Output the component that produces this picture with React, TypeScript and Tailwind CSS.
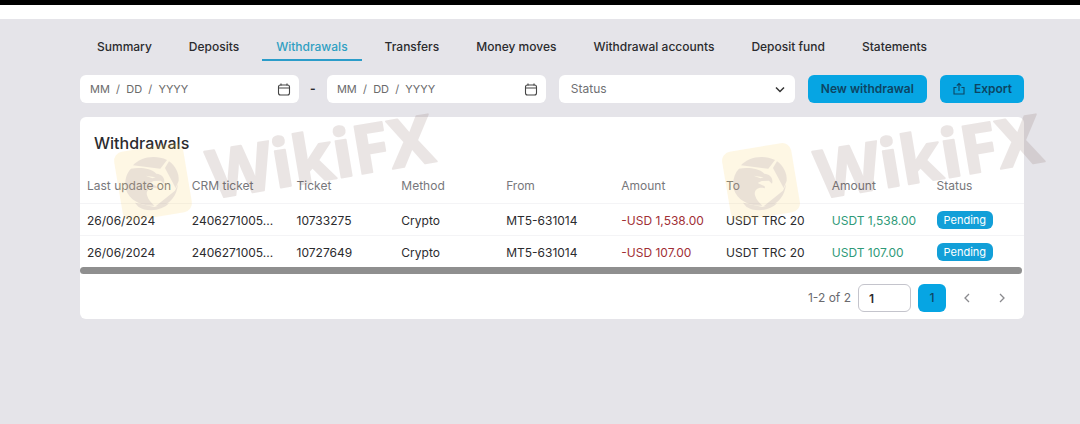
import { useState } from 'react';

const tabs = ['Summary', 'Deposits', 'Withdrawals', 'Transfers', 'Money moves', 'Withdrawal accounts', 'Deposit fund', 'Statements'];

const columns = [
    { label: 'Last update on', width: 'w-[11.1%]' },
    { label: 'CRM ticket', width: 'w-[11.1%]' },
    { label: 'Ticket', width: 'w-[11.1%]' },
    { label: 'Method', width: 'w-[11.1%]' },
    { label: 'From', width: 'w-[12.2%]' },
    { label: 'Amount', width: 'w-[11.1%]' },
    { label: 'To', width: 'w-[11.2%]' },
    { label: 'Amount', width: 'w-[11.1%]' },
    { label: 'Status', width: 'w-[10%]' },
];

type Withdrawal = {
    date: string;
    crmTicket: string;
    ticket: string;
    method: string;
    from: string;
    debit: string;
    to: string;
    credit: string;
    status: string;
};

const withdrawals: Withdrawal[] = [
    {
        date: '26/06/2024',
        crmTicket: '2406271005...',
        ticket: '10733275',
        method: 'Crypto',
        from: 'MT5-631014',
        debit: '-USD 1,538.00',
        to: 'USDT TRC 20',
        credit: 'USDT 1,538.00',
        status: 'Pending',
    },
    {
        date: '26/06/2024',
        crmTicket: '2406271005...',
        ticket: '10727649',
        method: 'Crypto',
        from: 'MT5-631014',
        debit: '-USD 107.00',
        to: 'USDT TRC 20',
        credit: 'USDT 107.00',
        status: 'Pending',
    },
];

function CalendarIcon() {
    return (
        <svg viewBox="0 0 14 14" className="size-3.5" fill="none" stroke="#444" strokeWidth="1.1">
            <rect x="1.5" y="3" width="11" height="10" rx="2" />
            <path d="M1.5 6h11M4 1.5v2M10 1.5v2" />
        </svg>
    );
}

function DateField({ label }: { label: string }) {
    return (
        <div className="flex h-7 min-w-0 flex-1 items-center rounded-md bg-white pr-2 pl-2.5">
            <input
                type="text"
                aria-label={label}
                placeholder="MM  /  DD  /  YYYY"
                className="min-w-0 flex-1 text-[11px] outline-none placeholder:text-[#6b6b6b]"
            />
            <button type="button" aria-label={`Open ${label} calendar`}>
                <CalendarIcon />
            </button>
        </div>
    );
}

function Watermark() {
    return (
        <svg viewBox="0 0 340 120" className="h-[120px] w-[340px] overflow-visible">
            <rect x="13" y="42" width="70" height="70" rx="9" fill="#f9cf60" opacity="0.17" transform="rotate(-9.5 48 77)" />
            {/* eagle inside a camera shutter */}
            <g transform="translate(2 33) scale(0.3333)" fill="#8a7898" opacity="0.17">
                <path d="M78 82C98 60 140 48 180 66L160 92Z" />
                <path d="M186 70C206 84 216 106 215 128L206 150L174 90Z" />
                <path d="M213 138C210 172 190 198 160 205L146 205L204 158Z" />
                <path d="M142 207L186 196C166 218 120 224 94 206L84 194Z" />
                <path d="M72 92C98 88 132 90 148 107C164 108 176 120 171 137L162 128L140 129L128 135L149 145L150 151C128 144 116 158 120 172C124 186 132 194 142 203C104 204 66 188 56 152C52 128 58 106 72 92ZM116 113L136 121L146 118Z" fillRule="evenodd" />
            </g>
            <text
                x="107"
                y="94"
                transform="rotate(-9.5 107 94)"
                fill="#5a3028"
                stroke="#5a3028"
                strokeWidth="2"
                strokeLinejoin="round"
                opacity="0.12"
                className="font-['Noto_Sans',sans-serif] text-[67px] font-bold"
            >
                WikiFX
            </text>
        </svg>
    );
}

export default function App() {
    const [activeTab, setActiveTab] = useState('Withdrawals');
    const [page, setPage] = useState('1');

    return (
        <div className="relative min-h-screen overflow-hidden bg-[#e5e4e9] font-[Inter,sans-serif] text-xs text-[#2b2b2e]">
            <div className="h-[5px] bg-black" />
            <div className="h-3.5 bg-white" />

            <main className="pt-3.5 pr-14 pl-20">
                <nav className="flex gap-[9px] pl-[3px]">
                    {tabs.map((tab) => (
                        <button
                            key={tab}
                            type="button"
                            onClick={() => setActiveTab(tab)}
                            className={`h-7 border-b-2 px-3.5 pt-0.5 font-medium whitespace-nowrap ${
                                tab === activeTab ? 'border-[#2b9cc9] text-[#2f9fc2]' : 'border-transparent'
                            }`}
                        >
                            {tab}
                        </button>
                    ))}
                </nav>

                <div className="mt-3.5 flex items-center gap-[13px]">
                    <div className="flex min-w-0 flex-1 items-center">
                        <DateField label="From date" />
                        <span className="w-7 text-center font-bold">-</span>
                        <DateField label="To date" />
                    </div>
                    <div className="relative w-[25%]">
                        <select
                            aria-label="Status"
                            defaultValue=""
                            className="h-7 w-full appearance-none rounded-md bg-white px-3 text-[#6f6f73] outline-none"
                        >
                            <option value="">Status</option>
                            <option value="pending">Pending</option>
                        </select>
                        <svg viewBox="0 0 10 10" className="pointer-events-none absolute top-2.5 right-2.5 size-2.5" fill="none" stroke="#333" strokeWidth="1.5">
                            <path d="M1 2.5l4 4 4-4" />
                        </svg>
                    </div>
                    <button type="button" className="h-7 rounded-md bg-[#06a5e3] px-[13px] font-semibold whitespace-nowrap text-[#0d4563]">
                        New withdrawal
                    </button>
                    <button type="button" className="flex h-7 items-center gap-2 rounded-md bg-[#06a5e3] px-3 font-semibold text-[#0d4563]">
                        <svg viewBox="0 0 14 14" className="size-3.5" fill="none" stroke="currentColor" strokeWidth="1.1">
                            <path d="M4.5 5.5H2V12h10V5.5H9.5M7 9V1.5M4.8 3.7L7 1.5l2.2 2.2" />
                        </svg>
                        Export
                    </button>
                </div>

                <section className="mt-3.5 rounded-md bg-white">
                    <h2 className="px-3.5 pt-4 pb-3.5 text-base leading-5 font-medium">Withdrawals</h2>
                    <table className="w-full table-fixed text-left">
                        <thead>
                            <tr className="h-9 border-b border-[#f4f4f6] text-[#77777b]">
                                {columns.map((col, i) => (
                                    <th key={i} className={`pt-0.5 pl-[7px] font-normal whitespace-nowrap ${col.width}`}>
                                        {col.label}
                                    </th>
                                ))}
                            </tr>
                        </thead>
                        <tbody>
                            {withdrawals.map((row) => (
                                <tr key={row.ticket} className="h-8 border-b border-[#f4f4f6] whitespace-nowrap last:border-0">
                                    <td className="pt-1 pl-[7px]">{row.date}</td>
                                    <td className="pt-1 pl-[7px]">{row.crmTicket}</td>
                                    <td className="pt-1 pl-[7px]">{row.ticket}</td>
                                    <td className="pt-1 pl-[7px]">{row.method}</td>
                                    <td className="pt-1 pl-[7px]">{row.from}</td>
                                    <td className="pt-1 pl-[7px] text-[#a12f35]">{row.debit}</td>
                                    <td className="pt-1 pl-[7px]">{row.to}</td>
                                    <td className="pt-1 pl-[7px] text-[#2f9a78]">{row.credit}</td>
                                    <td className="pt-0.5 pl-[7px]">
                                        <span className="inline-block rounded-md bg-[#129fd8] px-[7px] text-[11px] leading-[18px] text-white">
                                            {row.status}
                                        </span>
                                    </td>
                                </tr>
                            ))}
                        </tbody>
                    </table>
                    <div className="mr-0.5 h-[7px] rounded-full bg-[#8f8f8f]" />
                    <div className="flex items-center justify-end gap-[7px] pt-2.5 pr-2 pb-[7px]">
                        <span className="text-[#6a6a6e]">1-2 of 2</span>
                        <input
                            aria-label="Page"
                            value={page}
                            onChange={(e) => setPage(e.target.value)}
                            className="h-7 w-[53px] rounded-md border border-[#c4c4cc] px-2.5 font-semibold outline-none"
                        />
                        <button type="button" className="size-7 rounded-md bg-[#06a5e3] font-medium text-[#0d4563]">
                            1
                        </button>
                        <button type="button" aria-label="Previous page" className="flex size-7 items-center justify-center">
                            <svg viewBox="0 0 10 10" className="size-2.5" fill="none" stroke="#8a8a8e" strokeWidth="1.3">
                                <path d="M7 1L3 5l4 4" />
                            </svg>
                        </button>
                        <button type="button" aria-label="Next page" className="flex size-7 items-center justify-center">
                            <svg viewBox="0 0 10 10" className="size-2.5" fill="none" stroke="#8a8a8e" strokeWidth="1.3">
                                <path d="M3 1l4 4-4 4" />
                            </svg>
                        </button>
                    </div>
                </section>
            </main>

            <div className="pointer-events-none absolute top-[105px] left-[105px] flex gap-[268px]">
                <Watermark />
                <Watermark />
            </div>
        </div>
    );
}
